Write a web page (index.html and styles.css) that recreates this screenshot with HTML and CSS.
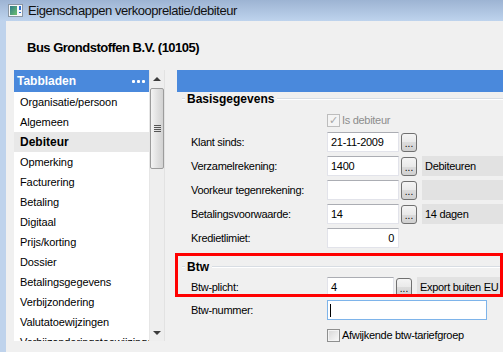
FILE: index.html
```html
<!DOCTYPE html>
<html lang="nl">
<head>
    <meta charset="UTF-8">
    <title>Eigenschappen verkooprelatie/debiteur</title>
    <link rel="stylesheet" href="styles.css">
</head>
<body>
    <div class="titlebar">
        <svg class="app-icon" width="15" height="13" viewBox="0 0 15 13">
            <rect x="0.5" y="0.5" width="14" height="12" fill="#f6f8fa" stroke="#8a96a3"/>
            <defs>
                <linearGradient id="ic" x1="0" y1="0" x2="1" y2="1">
                    <stop offset="0" stop-color="#2f7a8c"/>
                    <stop offset="1" stop-color="#6cc06a"/>
                </linearGradient>
            </defs>
            <rect x="2" y="2" width="7" height="9" fill="url(#ic)"/>
            <rect x="11" y="2" width="2" height="4" fill="#2d6fd0"/>
            <rect x="11" y="8" width="2" height="1" fill="#2d6fd0"/>
        </svg>
        <span class="title">Eigenschappen verkooprelatie/debiteur</span>
    </div>

    <div class="frame">
        <div class="edge"></div>
        <div class="client">
            <div class="company">Bus Grondstoffen B.V. (10105)</div>

            <div class="main">
                <div class="tabs">
                    <div class="tabs-head">
                        <span>Tabbladen</span>
                        <span class="dots"><i></i><i></i><i></i></span>
                    </div>
                    <div class="tab">Organisatie/persoon</div>
                    <div class="tab">Algemeen</div>
                    <div class="tab active">Debiteur</div>
                    <div class="tab">Opmerking</div>
                    <div class="tab">Facturering</div>
                    <div class="tab">Betaling</div>
                    <div class="tab">Digitaal</div>
                    <div class="tab">Prijs/korting</div>
                    <div class="tab">Dossier</div>
                    <div class="tab">Betalingsgegevens</div>
                    <div class="tab">Verbijzondering</div>
                    <div class="tab">Valutatoewijzingen</div>
                    <div class="tab">Verbijzonderingstoewijzingen</div>
                </div>

                <div class="scroll">
                    <div class="arrow"><span class="tri-up"></span></div>
                    <div class="thumb"><span class="grip"></span></div>
                    <div class="track"></div>
                    <div class="arrow"><span class="tri-down"></span></div>
                </div>

                <div class="content">
                    <div class="content-head"></div>

                    <div class="legend"><span>Basisgegevens</span></div>

                    <div class="row check-row">
                        <span class="label"></span>
                        <span class="checkbox disabled">&#10003;</span>
                        <span class="check-label disabled">Is debiteur</span>
                    </div>

                    <div class="row">
                        <span class="label">Klant sinds:</span>
                        <span class="field">21-11-2009</span>
                        <span class="dots-btn">...</span>
                    </div>

                    <div class="row">
                        <span class="label">Verzamelrekening:</span>
                        <span class="field">1400</span>
                        <span class="dots-btn">...</span>
                        <span class="info">Debiteuren</span>
                    </div>

                    <div class="row">
                        <span class="label">Voorkeur tegenrekening:</span>
                        <span class="field"></span>
                        <span class="dots-btn">...</span>
                        <span class="info"></span>
                    </div>

                    <div class="row">
                        <span class="label">Betalingsvoorwaarde:</span>
                        <span class="field">14</span>
                        <span class="dots-btn">...</span>
                        <span class="info">14 dagen</span>
                    </div>

                    <div class="row">
                        <span class="label">Kredietlimiet:</span>
                        <span class="field number">0</span>
                    </div>

                    <div class="btw-group">
                        <div class="legend btw-legend"><span>Btw</span></div>
                        <div class="row btw-row">
                            <span class="label">Btw-plicht:</span>
                            <span class="field narrow">4</span>
                            <span class="dots-btn">...</span>
                            <span class="info">Export buiten EU</span>
                        </div>
                        <div class="highlight"></div>
                    </div>

                    <div class="row vat-row">
                        <span class="label">Btw-nummer:</span>
                        <span class="field wide focus"><span class="caret"></span></span>
                    </div>

                    <div class="row tarief-row">
                        <span class="label"></span>
                        <span class="checkbox"></span>
                        <span class="check-label">Afwijkende btw-tariefgroep</span>
                    </div>
                </div>
            </div>
        </div>
    </div>
</body>
</html>
```

FILE: styles.css
```css
body {
    margin: 0;
    width: 503px;
    height: 352px;
    overflow: hidden;
    background-color: #f0f0f0;
    font-family: "Liberation Sans", Arial, sans-serif;
    font-size: 11px;
    color: #000;
}
.titlebar {
    height: 21px;
    display: flex;
    align-items: center;
    gap: 5px;
    padding-left: 8px;
    background: linear-gradient(#9db4d3, #bed3ed);
}
.app-icon {
    display: block;
}
.title {
    font-size: 13px;
    letter-spacing: -0.45px;
    color: #111;
}
.frame {
    display: flex;
    height: 331px;
}
.edge {
    width: 6px;
    background-color: #bfd3ec;
}
.client {
    flex: 1;
    min-width: 0;
}
.company {
    height: 30px;
    padding-top: 19px;
    padding-left: 21px;
    line-height: 16px;
    font-size: 13px;
    font-weight: bold;
    letter-spacing: -0.5px;
}
.main {
    display: flex;
    height: 271px;
}

/* tabbladen lijst */
.tabs {
    width: 135px;
    margin-left: 8px;
    background-color: #fff;
    overflow: hidden;
}
.tabs-head {
    height: 22px;
    display: flex;
    align-items: center;
    justify-content: space-between;
    padding: 0 4px 0 3px;
    background-color: #4a89dc;
    color: #fff;
    font-size: 12px;
    font-weight: bold;
}
.dots {
    display: flex;
    gap: 2px;
}
.dots i {
    width: 3px;
    height: 3px;
    background-color: #fff;
    border-radius: 1px;
}
.tab {
    height: 20px;
    line-height: 20px;
    padding-left: 6px;
    white-space: nowrap;
    letter-spacing: -0.1px;
}
.tab.active {
    background-color: #e8e8e8;
    font-size: 12px;
    font-weight: bold;
    letter-spacing: 0;
}

/* scrollbar */
.scroll {
    width: 16px;
    box-sizing: border-box;
    display: flex;
    flex-direction: column;
    background-color: #eeeeee;
    border-left: 1px solid #e6e6e6;
    border-right: 1px solid #e2e2e2;
}
.arrow {
    height: 17px;
    display: flex;
    align-items: center;
    justify-content: center;
}
.tri-up {
    border-left: 4px solid transparent;
    border-right: 4px solid transparent;
    border-bottom: 4px solid #3c3c3c;
}
.tri-down {
    border-left: 4px solid transparent;
    border-right: 4px solid transparent;
    border-top: 4px solid #3c3c3c;
}
.thumb {
    height: 79px;
    margin-top: 1px;
    display: flex;
    align-items: center;
    justify-content: center;
    border: 1px solid #9c9c9c;
    border-radius: 2px;
    background: linear-gradient(to right, #f4f4f4, #e0e0e0 55%, #d2d2d2);
}
.grip {
    width: 7px;
    height: 7px;
    background: repeating-linear-gradient(#555 0 1px, transparent 1px 2px);
}
.track {
    flex: 1;
}

/* inhoud */
.content {
    flex: 1;
    margin-left: 12px;
}
.content-head {
    height: 22px;
    background-color: #4a89dc;
}
.legend {
    height: 14px;
    display: flex;
    align-items: center;
    padding-left: 5px;
    font-size: 12px;
    font-weight: bold;
}
.legend::before,
.legend::after {
    content: "";
    height: 0;
    border-top: 1px solid #d8dde3;
    border-bottom: 1px solid #fff;
}
.legend::before {
    width: 3px;
    margin-right: 2px;
}
.legend::after {
    flex: 1;
    margin-left: 3px;
}
.row {
    height: 20px;
    display: flex;
    align-items: center;
    padding-left: 14px;
    margin-bottom: 4px;
    letter-spacing: -0.3px;
}
.label {
    width: 136px;
    flex-shrink: 0;
    white-space: nowrap;
}
.check-row {
    margin-top: 4px;
    margin-bottom: 2px;
}
.checkbox {
    width: 13px;
    height: 13px;
    box-sizing: border-box;
    border: 1px solid #8e8f8f;
    background: linear-gradient(135deg, #d6d6d6, #fafafa);
    box-shadow: inset 0 0 0 1px #f4f4f4;
    font-size: 11px;
    line-height: 11px;
    text-align: center;
    color: #a8a8a8;
    letter-spacing: 0;
}
.checkbox.disabled {
    border-color: #bdbdbd;
    background: #f4f4f4;
    box-shadow: none;
}
.check-label {
    margin-left: 2px;
}
.check-label.disabled {
    color: #8d8d8d;
}
.field {
    width: 72px;
    height: 20px;
    box-sizing: border-box;
    flex-shrink: 0;
    display: flex;
    align-items: center;
    padding-left: 3px;
    background-color: #fff;
    border: 1px solid #e2e3ea;
    border-top-color: #abadb3;
}
.field.number {
    justify-content: flex-end;
    padding-right: 4px;
}
.field.narrow {
    width: 67px;
}
.field.wide {
    width: 160px;
}
.field.focus {
    border-color: #7eb4ea;
}
.caret {
    width: 1px;
    height: 13px;
    margin-left: -1px;
    background-color: #000;
}
.dots-btn {
    width: 16px;
    height: 19px;
    box-sizing: border-box;
    flex-shrink: 0;
    margin-left: 2px;
    display: flex;
    align-items: flex-end;
    justify-content: center;
    padding-bottom: 3px;
    border: 1px solid #707070;
    border-radius: 3px;
    background: linear-gradient(#f4f4f4, #e9e9e9 50%, #dcdcdc 50%, #d0d0d0);
    font-size: 10px;
    line-height: 8px;
    letter-spacing: 0;
}
.info {
    flex: 1;
    height: 20px;
    margin-left: 5px;
    padding-left: 3px;
    display: flex;
    align-items: center;
    background-color: #e2e2e2;
    white-space: nowrap;
}

/* btw blok met rode markering */
.btw-group {
    position: relative;
    margin-top: 12px;
}
.btw-row {
    margin-top: 3px;
    margin-bottom: 0;
}
.highlight {
    position: absolute;
    top: -7px;
    left: -2px;
    right: 0;
    bottom: 0;
    border: 3px solid #ff0000;
}
.vat-row {
    margin-top: 3px;
    margin-bottom: 0;
}
.tarief-row {
    margin-top: 5px;
}
```
